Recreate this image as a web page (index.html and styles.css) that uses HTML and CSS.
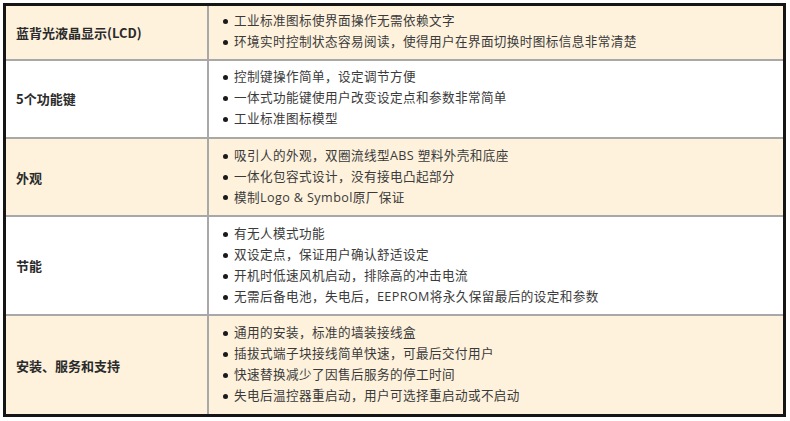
FILE: index.html
```html
<!DOCTYPE html>
<html lang="zh-CN">
<head>
<meta charset="utf-8">
<link rel="stylesheet" href="styles.css">
</head>
<body>
<div class="spec">
  <div class="row alt">
    <div class="label">蓝背光液晶显示(LCD)</div>
    <ul class="items">
      <li>工业标准图标使界面操作无需依赖文字</li>
      <li>环境实时控制状态容易阅读，使得用户在界面切换时图标信息非常清楚</li>
    </ul>
  </div>
  <div class="row">
    <div class="label">5个功能键</div>
    <ul class="items">
      <li>控制键操作简单，设定调节方便</li>
      <li>一体式功能键使用户改变设定点和参数非常简单</li>
      <li>工业标准图标模型</li>
    </ul>
  </div>
  <div class="row alt">
    <div class="label">外观</div>
    <ul class="items">
      <li>吸引人的外观，双圈流线型ABS 塑料外壳和底座</li>
      <li>一体化包容式设计，没有接电凸起部分</li>
      <li>模制Logo &amp; Symbol原厂保证</li>
    </ul>
  </div>
  <div class="row">
    <div class="label">节能</div>
    <ul class="items">
      <li>有无人模式功能</li>
      <li>双设定点，保证用户确认舒适设定</li>
      <li>开机时低速风机启动，排除高的冲击电流</li>
      <li>无需后备电池，失电后，EEPROM将永久保留最后的设定和参数</li>
    </ul>
  </div>
  <div class="row alt">
    <div class="label">安装、服务和支持</div>
    <ul class="items">
      <li>通用的安装，标准的墙装接线盒</li>
      <li>插拔式端子块接线简单快速，可最后交付用户</li>
      <li>快速替换减少了因售后服务的停工时间</li>
      <li>失电后温控器重启动，用户可选择重启动或不启动</li>
    </ul>
  </div>
</div>
</body>
</html>
```

FILE: styles.css
```css
html, body {
  margin: 0;
  padding: 0;
  background: #ffffff;
}
body {
  padding: 3px 0 0 3px;
  font-family: "Open Sans", "Noto Sans CJK SC", sans-serif;
}
.spec {
  width: 777px;
  border: 3px solid #151515;
  display: flex;
  flex-direction: column;
}
.row {
  display: grid;
  grid-template-columns: 203px 1fr;
  background: #ffffff;
  border-top: 2px solid #a8a8a8;
}
.row:first-child {
  border-top: none;
}
.row.alt {
  background: #fef2dd;
}
.label {
  border-right: 2px solid #a8a8a8;
  display: flex;
  align-items: center;
  padding-left: 10px;
  font-size: 13px;
  font-weight: 700;
  color: #2a2a2a;
  font-family: "Noto Sans CJK SC", sans-serif;
}
.items {
  list-style: none;
  margin: 0;
  padding: 6.8px 0 6.8px 14px;
  font-size: 12.6px;
  line-height: 20.9px;
  color: #3a3a3a;
  letter-spacing: 0.4px;
}
.row:first-child .items {
  padding-top: 5.4px;
  padding-bottom: 5.4px;
}
.items li {
  display: flex;
  align-items: center;
  gap: 6px;
}
.items li::before {
  content: "";
  width: 5px;
  height: 5px;
  border-radius: 50%;
  background: #1a1a1a;
  flex: none;
}
```
